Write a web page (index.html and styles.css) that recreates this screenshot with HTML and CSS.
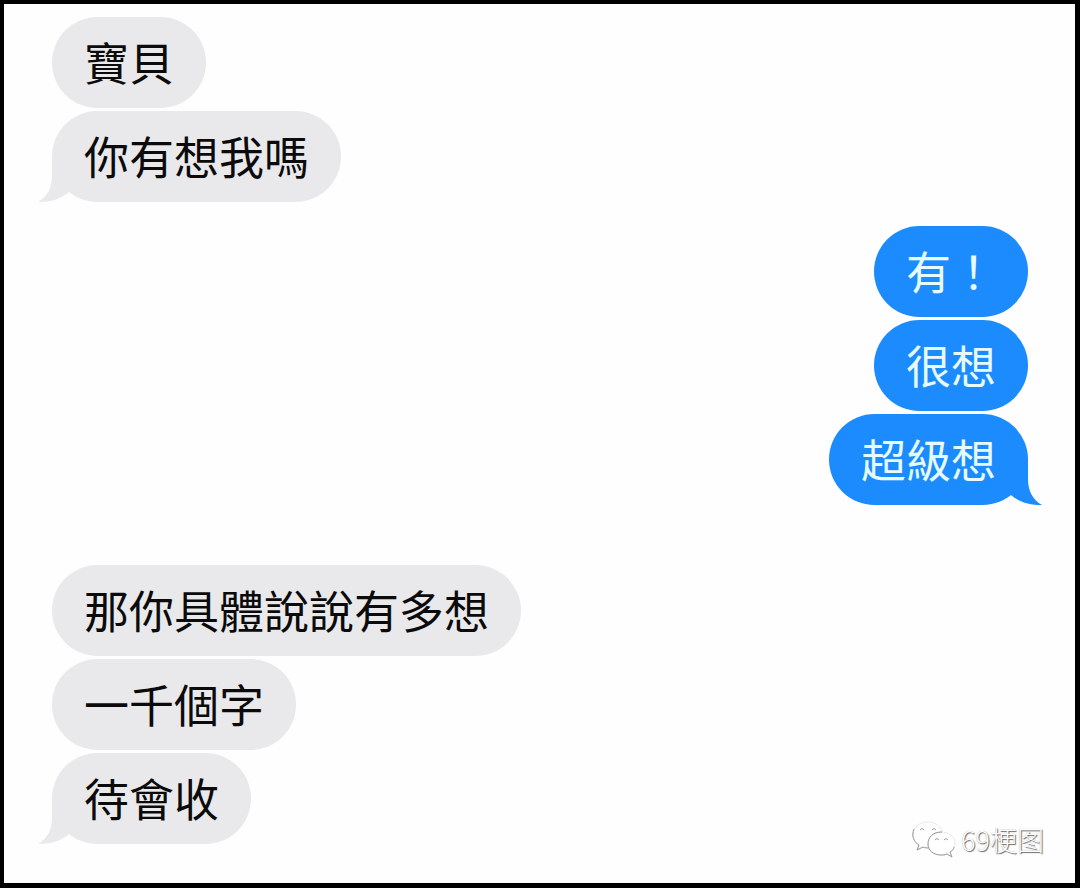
FILE: index.html
```html
<!DOCTYPE html>
<html lang="zh-Hant">
<head>
<meta charset="utf-8">
<meta name="viewport" content="width=device-width, initial-scale=1">
<title>訊息</title>
<link rel="stylesheet" href="styles.css">
</head>
<body>
<main class="chat">
  <section class="group received">
    <p class="bubble">寶貝</p>
    <p class="bubble">你有想我嗎<svg class="tail" viewBox="0 0 42 46" aria-hidden="true"><path d="M13 0V20C13 32 8 41 -1 46C12 46 22 43 30 36L42 30V0Z"/></svg></p>
  </section>
  <section class="group sent">
    <p class="bubble">有！</p>
    <p class="bubble">很想</p>
    <p class="bubble">超級想<svg class="tail" viewBox="0 0 42 46" aria-hidden="true"><path d="M13 0V20C13 32 8 41 -1 46C12 46 22 43 30 36L42 30V0Z"/></svg></p>
  </section>
  <section class="group received later">
    <p class="bubble">那你具體說說有多想</p>
    <p class="bubble">一千個字</p>
    <p class="bubble">待會收<svg class="tail" viewBox="0 0 42 46" aria-hidden="true"><path d="M13 0V20C13 32 8 41 -1 46C12 46 22 43 30 36L42 30V0Z"/></svg></p>
  </section>
  <footer class="watermark">
    <svg class="logo" viewBox="0 0 44 38" aria-hidden="true">
      <path class="face" d="M16 1C7 1 1 7 1 14C1 18 3 22 7 24L5 29L11 26C14 27 17 27 20 26C30 25 32 19 31 13C30 6 24 1 16 1Z"/>
      <path class="edge" d="M2 8C-1 15 2 21 7 24L5 29L11 26C13 27 15 27 17 27"/>
      <path class="face" d="M29 11C21 11 16 16 16 23C16 30 22 34 29 34C31 34 33 34 35 33L40 36L38 31C41 29 43 26 43 22C43 16 37 11 29 11Z"/>
      <path class="edge" d="M30 11C21 11 16 16 16 23C16 30 22 34 29 34C31 34 33 34 35 33L40 36L38 31C40 30 42 28 42 26"/>
      <path class="edge" d="M8 9Q10 6 12 9M20 9Q22 6 24 9M23 19Q25 16 27 19M32 19Q34 16 36 19"/>
    </svg>
    <span>69梗图</span>
  </footer>
</main>
</body>
</html>
```
FILE: styles.css
```css
* {
  box-sizing: border-box;
}

body {
  margin: 0;
  background: #fff;
  font-family: "Noto Sans CJK TC", "Noto Sans CJK SC", sans-serif;
}

.chat {
  position: relative;
  display: flex;
  flex-direction: column;
  gap: 24px;
  min-height: calc(100vh - 1px);
  padding: 13px 47px 39px 48px;
  border: solid #000;
  border-width: 4px 5px 5px 4px;
  background: #fefefe;
}

.group {
  display: flex;
  flex-direction: column;
  align-items: flex-start;
  gap: 3px;
}

.sent {
  align-items: flex-end;
}

.later {
  margin-top: 36px;
}

.bubble {
  position: relative;
  margin: 0;
  padding: 12px 32px 13px;
  border-radius: 46px;
  background: #e9e9eb;
  color: #0b0b0c;
  font-size: 45px;
  line-height: 66px;
}

.sent .bubble {
  background: #1b8bfe;
  color: #e6fbff;
}

.tail {
  position: absolute;
  bottom: 0;
  left: -13px;
  width: 42px;
  height: 46px;
  overflow: visible;
  fill: #e9e9eb;
  z-index: -1;
}

.bubble:has(.tail) {
  z-index: 0;
}

.sent .tail {
  right: -13px;
  left: auto;
  transform: scaleX(-1);
  fill: #1b8bfe;
}

.watermark {
  position: absolute;
  right: 31px;
  bottom: 23px;
  display: flex;
  align-items: center;
  gap: 5px;
  color: #fff;
  font-family: "Noto Sans CJK SC", sans-serif;
  font-size: 27px;
  font-weight: 300;
  line-height: 40px;
  text-shadow: 1px 1px 1px #666, 0 0 1px #aaa;
}

.logo {
  width: 44px;
  height: 38px;
  overflow: visible;
}

.face {
  fill: #fff;
  stroke: #e8e8e8;
}

.edge {
  fill: none;
  stroke: #9a9a9a;
}
```
